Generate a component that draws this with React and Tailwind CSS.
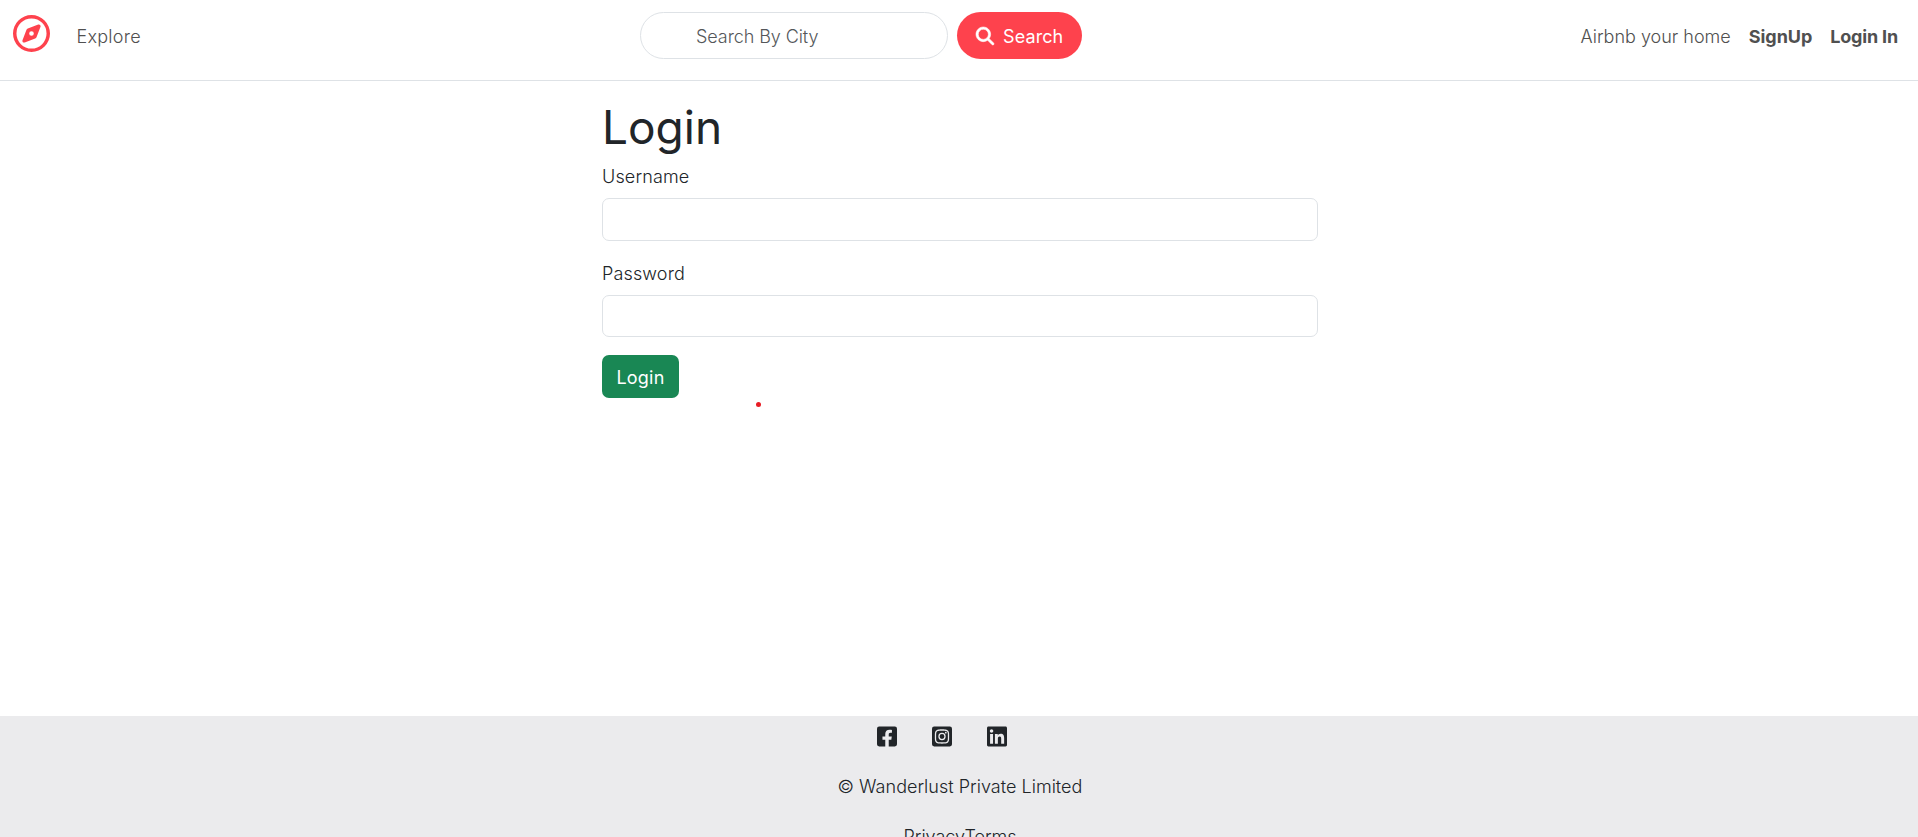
import React from "react";
import { FaRegCompass, FaMagnifyingGlass } from "react-icons/fa6";
import { FaFacebookSquare, FaInstagramSquare, FaLinkedin } from "react-icons/fa";

function Navbar() {
  return (
    <nav className="flex h-[81px] items-start border-b border-[#dee2e6] bg-white text-[#505050]">
      <div className="flex w-[640px] items-start pl-[13px]">
        <a href="#" className="mt-[15px] text-[#fe424d]">
          <FaRegCompass className="h-[37px] w-[37px]" />
        </a>
        <a href="#" className="ml-[26.5px] mt-[23px] leading-[27px] tracking-[0.25px]">Explore</a>
      </div>
      <form className="mt-3 flex gap-[9px]">
        <input
          type="search"
          placeholder="Search By City"
          className="h-[47px] w-[308px] rounded-[24px] border border-[#dee2e6] bg-white pl-[55px] pt-px font-light tracking-[-0.08px] outline-none placeholder:text-[#54575a]"
        />
        <button type="button" className="flex h-[47px] w-[125px] items-center rounded-[24px] bg-[#fe424d] pl-[19px] font-normal text-white">
          <FaMagnifyingGlass className="h-[18px] w-[18px] overflow-visible" strokeWidth="16" />
          <span className="ml-[9px] mt-[2px] leading-[27px] tracking-[0.1px]">Search</span>
        </button>
      </form>
      <div className="ml-auto mt-[23px] flex gap-[18px] pr-[20px] leading-[27px]">
        <a href="#">Airbnb your home</a>
        <a href="#" className="font-bold tracking-[-0.05px]">SignUp</a>
        <a href="#" className="font-bold tracking-[-0.18px]">Login In</a>
      </div>
    </nav>
  );
}

function Field({ id, label, type, inputHeight }) {
  return (
    <div className="mb-[18px] flex flex-col">
      <label htmlFor={id} className="mb-[8px] mt-px self-start leading-[27px] tracking-[0.15px]">{label}</label>
      <input id={id} type={type} className={`${inputHeight} w-full rounded-[7px] border border-[#dee2e6] bg-white px-[13px] outline-none`} />
    </div>
  );
}

function LoginForm() {
  return (
    <main className="h-[635px] pl-[602px] pt-[18px]">
      <form className="w-[716px]">
        <h1 className="h-[63px] text-[46px] font-normal leading-[56px]">Login</h1>
        <Field id="username" label="Username" type="text" inputHeight="h-[43px]" />
        <Field id="password" label="Password" type="password" inputHeight="h-[42px]" />
        <button type="button" className="h-[43px] w-[77px] rounded-[7px] bg-[#198754] pt-px font-normal tracking-[0.2px] text-white">Login</button>
      </form>
    </main>
  );
}

function Footer() {
  return (
    <footer className="flex h-[121px] flex-col items-center overflow-hidden bg-[#ebebed]">
      <div className="mt-[9px] flex h-[23px] w-[164px] items-center gap-[35px]">
        <FaFacebookSquare className="h-[23px] w-[20px]" />
        <FaInstagramSquare className="h-[23px] w-[20px]" />
        <FaLinkedin className="h-[23px] w-[20px]" />
      </div>
      <p className="mt-[25px] pl-[2px] leading-[27px] tracking-[0.02px]">© Wanderlust Private Limited</p>
      <p className="mt-[23px] pl-[2px] leading-[27px]">
        <a href="#">Privacy</a>
        <a href="#">Terms</a>
      </p>
    </footer>
  );
}

export default function App() {
  return (
    <div className="relative h-[837px] overflow-hidden bg-white font-['Inter',sans-serif] text-[18px] font-light text-[#212529]">
      <Navbar />
      <LoginForm />
      <Footer />
      <span className="absolute left-[756px] top-[402px] h-[5px] w-[5px] rounded-full bg-[#e81c24]" />
    </div>
  );
}
